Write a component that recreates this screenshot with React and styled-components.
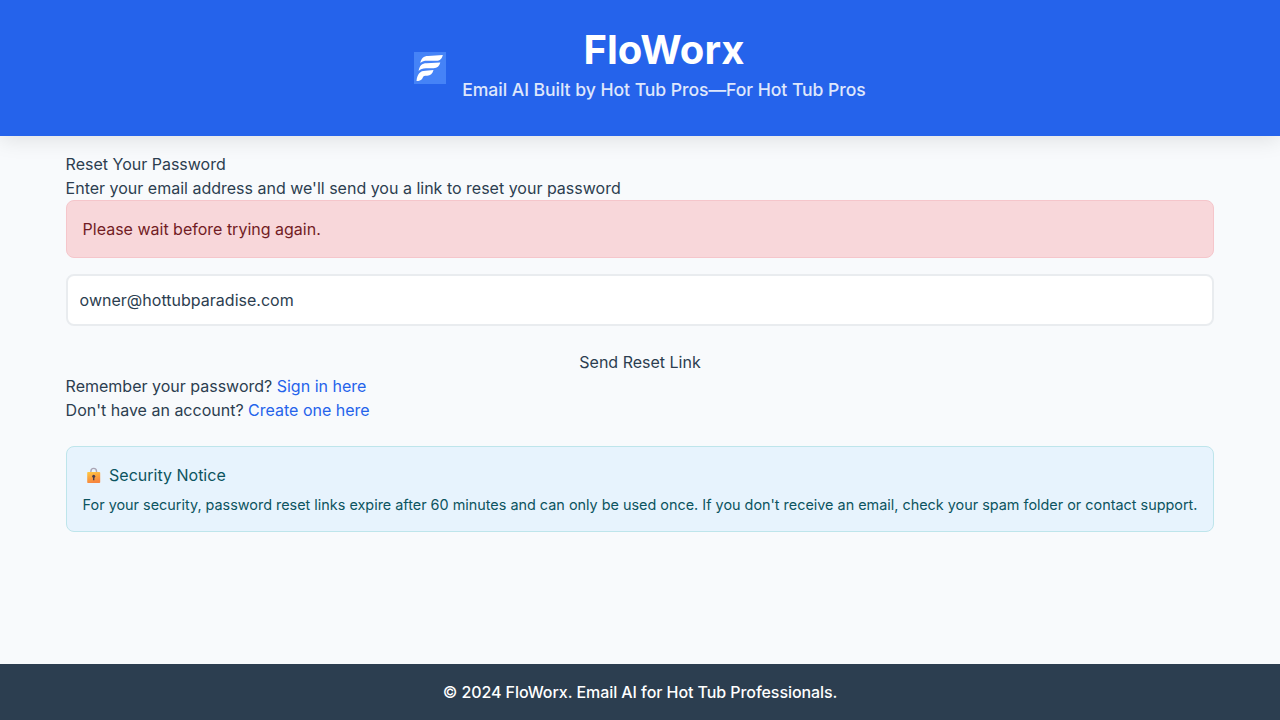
import React, { useState } from "react";
import styled, { createGlobalStyle } from "styled-components";

const GlobalStyle = createGlobalStyle`
  *, *::before, *::after { box-sizing: border-box; }
  html, body { margin: 0; padding: 0; }
  body {
    font-family: Inter, "Liberation Sans", sans-serif;
    font-size: 16px;
    line-height: 1.5;
    color: #2c3e50;
    background: #f8fafc;
  }
`;

const Page = styled.div`
  min-height: 100vh;
  display: flex;
  flex-direction: column;
`;

const Header = styled.header`
  height: 136px;
  display: flex;
  justify-content: center;
  align-items: center;
  gap: 16px;
  background: #2563eb;
  color: #fff;
  box-shadow: 0 4px 20px rgba(0, 0, 0, 0.1);
`;

const Logo = styled.svg`
  width: 32px;
  height: 32px;
  display: block;
`;

const Brand = styled.div`
  text-align: center;
  padding-bottom: 8px;
`;

const Title = styled.h1`
  margin: 0;
  font-size: 40px;
  line-height: 48px;
  font-weight: 700;
`;

const Tagline = styled.p`
  margin: 3px 0 0;
  font-size: 17.6px;
  line-height: 26px;
  font-weight: 500;
  letter-spacing: -0.045px;
  opacity: 0.85;
`;

const Main = styled.main`
  flex: 1;
  display: flex;
  justify-content: center;
  align-items: flex-start;
  padding-top: 16px;
`;

const Card = styled.section`
  width: 1148.8px;
`;

const Line = styled.div`
  line-height: 24px;
`;

const Alert = styled.div`
  padding: 16px;
  margin-bottom: 16px;
  border: 1px solid #f5c6cb;
  border-radius: 8px;
  background: #f8d7da;
  color: #721c24;
`;

const EmailInput = styled.input`
  display: block;
  width: 100%;
  height: 52px;
  padding: 12px;
  margin-bottom: 24px;
  border: 2px solid #e9ecef;
  border-radius: 8px;
  background: #fff;
  color: #2c3e50;
  font: inherit;
  letter-spacing: 0.015px;
  outline: none;
`;

const SubmitButton = styled.button`
  display: block;
  width: 100%;
  padding: 0;
  border: 0;
  background: none;
  color: inherit;
  font: inherit;
  line-height: 24px;
  cursor: pointer;
`;

const Link = styled.a`
  color: #2563eb;
  text-decoration: none;
`;

const Notice = styled.aside`
  margin-top: 24px;
  padding: 16px;
  border: 1px solid #bee5eb;
  border-radius: 8px;
  background: #e7f3fd;
  color: #0c5460;
`;

const NoticeTitle = styled.div`
  display: flex;
  align-items: center;
  gap: 4.5px;
  margin-bottom: 8px;
`;

const LockIcon = styled.svg`
  width: 22px;
  height: 20px;
`;

const NoticeText = styled.p`
  margin: 0;
  font-size: 14.4px;
  line-height: 20px;
  letter-spacing: 0.004px;
  white-space: nowrap;
`;

const Footer = styled.footer`
  height: 56px;
  display: flex;
  justify-content: center;
  align-items: center;
  background: #2c3e50;
  color: #fff;
  font-weight: 500;
  letter-spacing: -0.07px;
`;

function BrandLogo() {
  return (
    <Logo viewBox="0 0 32 32" aria-hidden="true">
      <rect width="32" height="32" fill="#4583f7" />
      <g fill="#fff">
        <path d="M6.300 11C7.300 6 9.500 3.900 14 3.900L28.800 3C28 6.800 26 8.800 22.300 8.800H13.300C10 8.800 8 9.300 6.300 11Z" />
        <path d="M4.600 19C5.600 13.500 8 11.300 12.500 11.300L26.300 10.600C25.300 14.300 23.300 16.200 19.700 16.200H12C8.500 16.200 6.500 17 4.600 19Z" />
        <path d="M2.500 29C3.300 22 6 18.800 11.500 18.800L19.500 18.100C18.500 22 16.500 23.700 13.200 23.700H11.300C9.300 23.700 9.200 25 8.200 26.700C7.200 28.400 5 29 2.500 29Z" />
      </g>
    </Logo>
  );
}

function Lock() {
  return (
    <LockIcon viewBox="0 0 22 20" aria-hidden="true">
      <defs>
        <linearGradient id="lockBody" x1="0" y1="0" x2="0.35" y2="1">
          <stop offset="0" stopColor="#ffcb45" />
          <stop offset="0.5" stopColor="#fba63e" />
          <stop offset="1" stopColor="#f7863f" />
        </linearGradient>
      </defs>
      <path d="M7.900 8V6.200A2.800 2.800 0 0 1 13.500 6.200V8" fill="none" stroke="#aaa4b4" strokeWidth="1.400" />
      <rect x="4.200" y="7" width="13" height="11" rx="0.800" fill="url(#lockBody)" />
      <circle cx="10.700" cy="11.200" r="1.500" fill="#493b4d" />
      <path d="M10 11.300H11.400V15.300H10Z" fill="#493b4d" />
    </LockIcon>
  );
}

export default function App() {
  const [email, setEmail] = useState("owner@hottubparadise.com");
  return (
    <>
      <GlobalStyle />
      <Page>
        <Header>
          <BrandLogo />
          <Brand>
            <Title>FloWorx</Title>
            <Tagline>Email AI Built by Hot Tub Pros—For Hot Tub Pros</Tagline>
          </Brand>
        </Header>
        <Main>
          <Card>
            <Line>Reset Your Password</Line>
            <Line>Enter your email address and we'll send you a link to reset your password</Line>
            <Alert>Please wait before trying again.</Alert>
            <EmailInput type="email" value={email} onChange={(e) => setEmail(e.target.value)} />
            <SubmitButton type="button">Send Reset Link</SubmitButton>
            <Line>Remember your password? <Link href="#">Sign in here</Link></Line>
            <Line>Don't have an account? <Link href="#">Create one here</Link></Line>
            <Notice>
              <NoticeTitle>
                <Lock />
                <span>Security Notice</span>
              </NoticeTitle>
              <NoticeText>
                For your security, password reset links expire after 60 minutes and can only be used once. If you don't receive an email, check your spam folder or contact support.
              </NoticeText>
            </Notice>
          </Card>
        </Main>
        <Footer>© 2024 FloWorx. Email AI for Hot Tub Professionals.</Footer>
      </Page>
    </>
  );
}
